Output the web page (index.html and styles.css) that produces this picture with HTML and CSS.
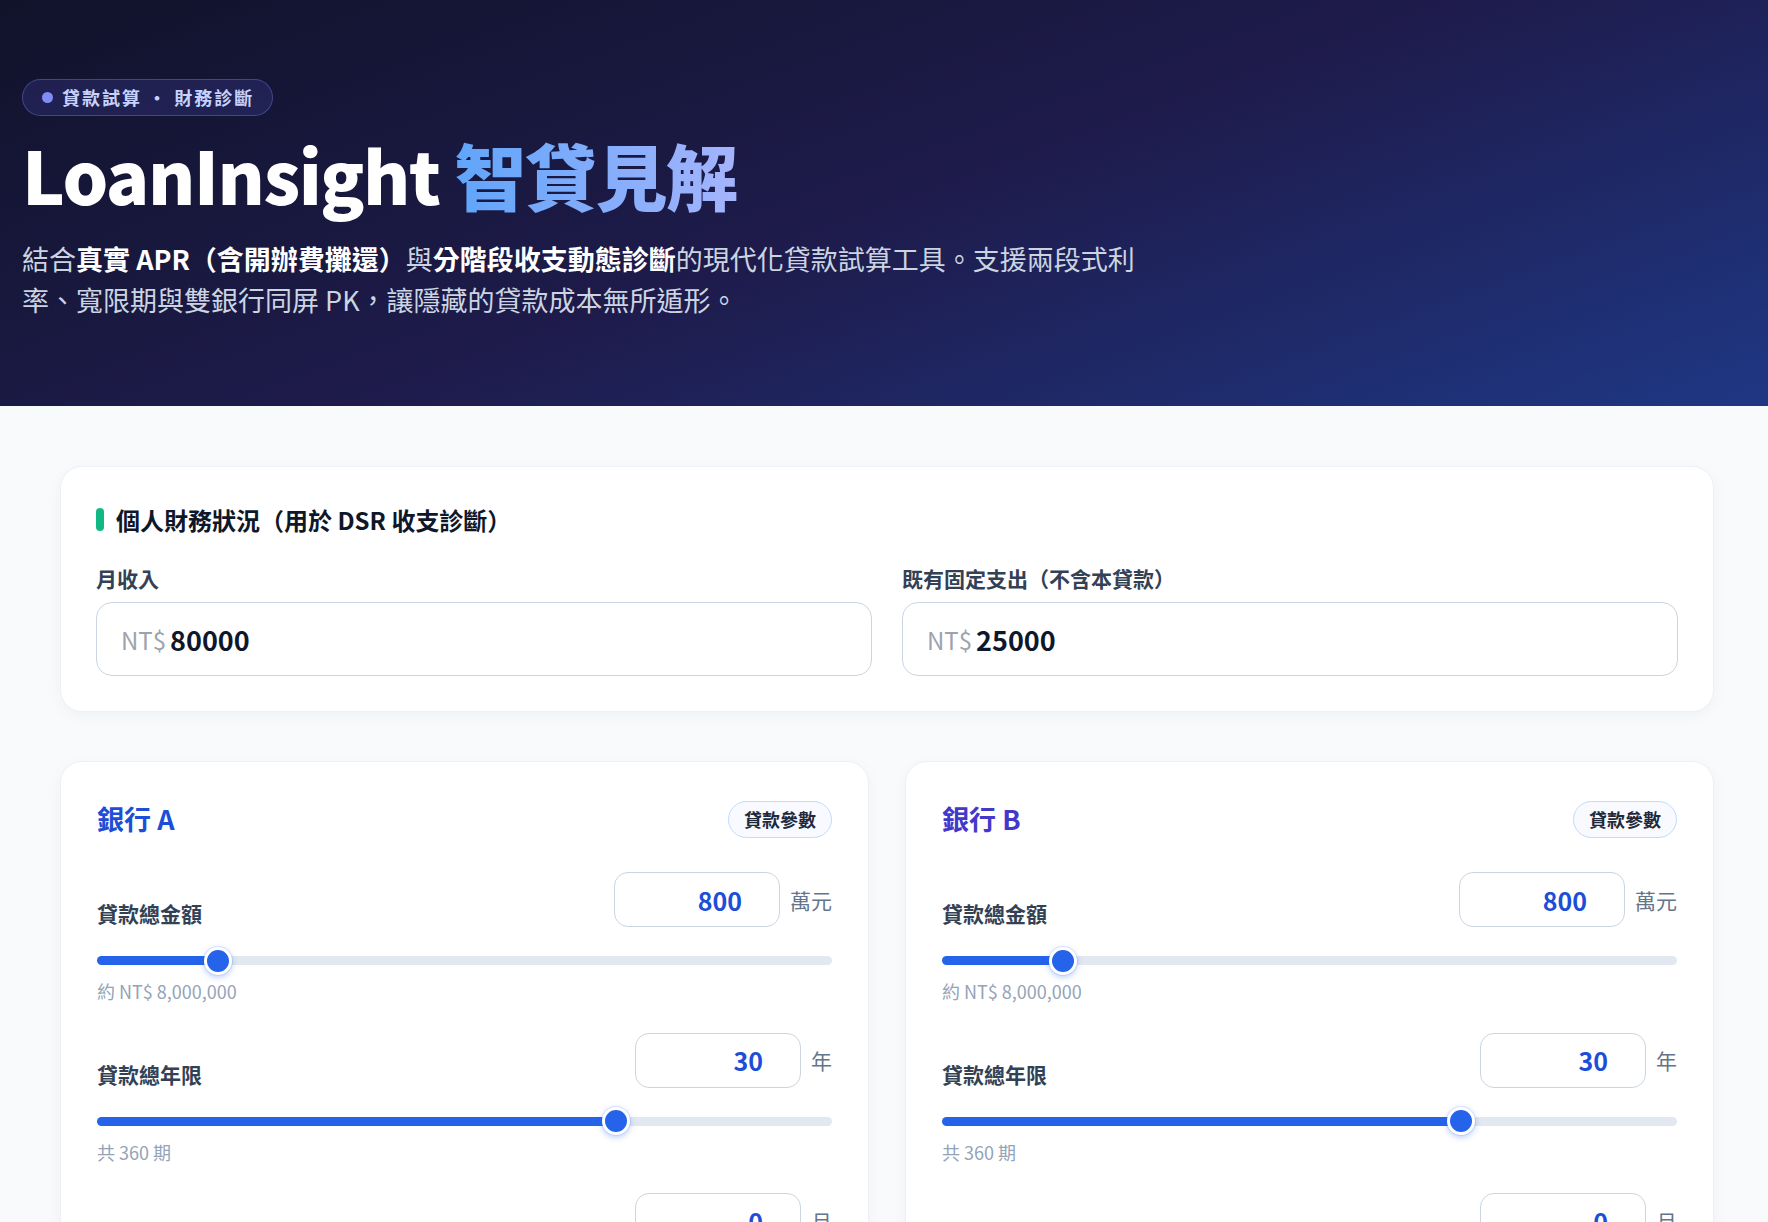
FILE: index.html
```html
<!DOCTYPE html>
<html lang="zh-Hant">
<head>
  <meta charset="utf-8">
  <title>LoanInsight 智貸見解</title>
  <link rel="stylesheet" href="styles.css">
</head>
<body>
  <header class="hero">
    <span class="hero-tag"><span class="dot"></span>貸款試算 ・ 財務診斷</span>
    <h1 class="hero-title">LoanInsight <span class="accent">智貸見解</span></h1>
    <p class="hero-desc">結合<strong>真實 APR（含開辦費攤還）</strong>與<strong>分階段收支動態診斷</strong>的現代化貸款試算工具。支援兩段式利率、寬限期與雙銀行同屏 PK，讓隱藏的貸款成本無所遁形。</p>
  </header>

  <main class="page">
    <!-- personal finance, feeds the DSR check -->
    <section class="card profile">
      <h2 class="card-title">個人財務狀況（用於 DSR 收支診斷）</h2>
      <div class="profile-grid">
        <div>
          <label class="field-label" for="income">月收入</label>
          <div class="money">
            <span class="prefix">NT$</span>
            <input id="income" type="text" inputmode="numeric" value="80000">
          </div>
        </div>
        <div>
          <label class="field-label" for="expense">既有固定支出（不含本貸款）</label>
          <div class="money">
            <span class="prefix">NT$</span>
            <input id="expense" type="text" inputmode="numeric" value="25000">
          </div>
        </div>
      </div>
    </section>

    <div class="banks">
      <section class="card bank">
        <div class="bank-head">
          <h2 class="bank-name">銀行 A</h2>
          <span class="chip">貸款參數</span>
        </div>

        <div class="slider-row">
          <div class="slider-top">
            <span class="slider-label">貸款總金額</span>
            <div class="num-box"><input type="text" value="800"><span class="unit">萬元</span></div>
          </div>
          <input class="range" type="range" min="50" max="5000" step="10" value="800" style="--fill: 16.5%">
          <div class="hint">約 NT$ 8,000,000</div>
        </div>

        <div class="slider-row">
          <div class="slider-top">
            <span class="slider-label">貸款總年限</span>
            <div class="num-box"><input type="text" value="30"><span class="unit">年</span></div>
          </div>
          <input class="range" type="range" min="5" max="40" value="30" style="--fill: 70.6%">
          <div class="hint">共 360 期</div>
        </div>

        <div class="slider-row">
          <div class="slider-top">
            <span class="slider-label">寬限期</span>
            <div class="num-box"><input type="text" value="0"><span class="unit">月</span></div>
          </div>
          <input class="range" type="range" min="0" max="60" value="0" style="--fill: 1.9%">
          <div class="hint">寬限期內只繳利息</div>
        </div>
      </section>

      <section class="card bank bank-b">
        <div class="bank-head">
          <h2 class="bank-name">銀行 B</h2>
          <span class="chip">貸款參數</span>
        </div>

        <div class="slider-row">
          <div class="slider-top">
            <span class="slider-label">貸款總金額</span>
            <div class="num-box"><input type="text" value="800"><span class="unit">萬元</span></div>
          </div>
          <input class="range" type="range" min="50" max="5000" step="10" value="800" style="--fill: 16.5%">
          <div class="hint">約 NT$ 8,000,000</div>
        </div>

        <div class="slider-row">
          <div class="slider-top">
            <span class="slider-label">貸款總年限</span>
            <div class="num-box"><input type="text" value="30"><span class="unit">年</span></div>
          </div>
          <input class="range" type="range" min="5" max="40" value="30" style="--fill: 70.6%">
          <div class="hint">共 360 期</div>
        </div>

        <div class="slider-row">
          <div class="slider-top">
            <span class="slider-label">寬限期</span>
            <div class="num-box"><input type="text" value="0"><span class="unit">月</span></div>
          </div>
          <input class="range" type="range" min="0" max="60" value="0" style="--fill: 1.9%">
          <div class="hint">寬限期內只繳利息</div>
        </div>
      </section>
    </div>
  </main>
</body>
</html>
```

FILE: styles.css
```css
body {
  margin: 0;
  font-family: "Noto Sans CJK TC", "Noto Sans", sans-serif;
  background-color: #f8fafc;
  color: #0f172a;
}

/* ---------- hero ---------- */

.hero {
  padding: 79px 22px 86px;
  background: linear-gradient(160deg, #10132a 0%, #1e1b4b 50%, #1f3784 100%);
  color: #fff;
}

.hero-tag {
  display: inline-flex;
  align-items: center;
  gap: 9px;
  padding: 5px 18px 5px 19px;
  border: 1px solid rgba(129, 140, 248, 0.35);
  border-radius: 999px;
  background-color: rgba(99, 102, 241, 0.16);
  color: #c7d2fe;
  font-size: 18px;
  font-weight: 700;
  line-height: 1.4;
  letter-spacing: 2px;
}

.hero-tag .dot {
  width: 11px;
  height: 11px;
  border-radius: 50%;
  background-color: #818cf8;
}

.hero-title {
  margin: 17px 0 0;
  font-size: 72px;
  line-height: 1.15;
  font-weight: 900;
  letter-spacing: -1.5px;
}

.hero-title .accent {
  background: linear-gradient(90deg, #60a5fa, #a5b4fc);
  -webkit-background-clip: text;
  background-clip: text;
  color: transparent;
}

.hero-desc {
  margin: 22px 0 0;
  max-width: 1120px;
  font-size: 27px;
  line-height: 41px;
  color: #cbd5e1;
}

.hero-desc strong {
  color: #fff;
}

/* ---------- layout ---------- */

.page {
  padding: 60px 54px 60px 60px;
}

.card {
  background-color: #fff;
  border: 1px solid #edf1f6;
  border-radius: 22px;
  box-shadow: 0 4px 16px rgba(15, 23, 42, 0.04);
}

/* ---------- personal finance ---------- */

.profile {
  padding: 35px;
  margin-bottom: 49px;
}

.card-title {
  display: flex;
  align-items: center;
  gap: 12px;
  margin: 0 0 25px;
  font-size: 24px;
  line-height: 36px;
  font-weight: 700;
  color: #0f172a;
}

.card-title::before {
  content: "";
  width: 8px;
  height: 23px;
  border-radius: 4px;
  background-color: #10b981;
}

.profile-grid {
  display: grid;
  grid-template-columns: 1fr 1fr;
  gap: 30px;
}

.field-label {
  display: block;
  margin-bottom: 8px;
  font-size: 21px;
  line-height: 31.5px;
  font-weight: 700;
  color: #334155;
}

.money {
  display: flex;
  align-items: center;
  height: 74px;
  box-sizing: border-box;
  padding: 0 24px;
  border: 1px solid #cbd5e1;
  border-radius: 16px;
}

.money .prefix {
  margin-right: 4px;
  font-size: 24px;
  color: #9ca3af;
}

.money input {
  width: 100%;
  padding: 0;
  border: 0;
  outline: none;
  background: transparent;
  font: 700 27px "Noto Sans CJK TC", sans-serif;
  color: #0f172a;
}

/* ---------- bank cards ---------- */

.banks {
  display: grid;
  grid-template-columns: 1fr 1fr;
  gap: 36px;
  align-items: start;
}

.bank {
  padding: 37px 36px 36px;
}

.bank-head {
  display: flex;
  justify-content: space-between;
  align-items: center;
  margin-bottom: 33px;
}

.bank-name {
  margin: 0;
  font-size: 27px;
  line-height: 40px;
  font-weight: 700;
  color: #1d4ed8;
}

.bank-b .bank-name {
  color: #4338ca;
}

.chip {
  padding: 4px 15px;
  border: 1px solid #bfdbfe;
  border-radius: 999px;
  background-color: #f8faff;
  color: #1e293b;
  font-size: 18px;
  line-height: 27px;
  font-weight: 700;
}

.slider-row {
  margin-bottom: 28px;
}

.slider-top {
  display: flex;
  justify-content: space-between;
  align-items: flex-end;
}

.slider-label {
  font-size: 21px;
  line-height: 1.3;
  font-weight: 700;
  color: #334155;
}

.num-box {
  display: flex;
  align-items: center;
  gap: 10px;
}

.num-box input {
  width: 166px;
  height: 55px;
  box-sizing: border-box;
  padding: 0 37px 0 12px;
  border: 1px solid #cbd5e1;
  border-radius: 14px;
  outline: none;
  text-align: right;
  font: 700 25px "Noto Sans CJK TC", sans-serif;
  color: #1d4ed8;
}

.num-box .unit {
  font-size: 21px;
  color: #64748b;
}

.range {
  -webkit-appearance: none;
  appearance: none;
  display: block;
  width: 100%;
  height: 9px;
  margin: 29px 0 13px;
  border-radius: 999px;
  background: linear-gradient(to right, #2563eb var(--fill), #e2e8f0 var(--fill));
  outline: none;
}

.range::-webkit-slider-thumb {
  -webkit-appearance: none;
  box-sizing: border-box;
  width: 28px;
  height: 28px;
  border: 3px solid #fff;
  border-radius: 50%;
  background-color: #2563eb;
  box-shadow: 0 0 0 1px rgba(37, 99, 235, 0.12), 0 2px 6px rgba(37, 99, 235, 0.35);
  cursor: pointer;
}

.hint {
  font-size: 18px;
  line-height: 26.5px;
  color: #94a3b8;
}
```
